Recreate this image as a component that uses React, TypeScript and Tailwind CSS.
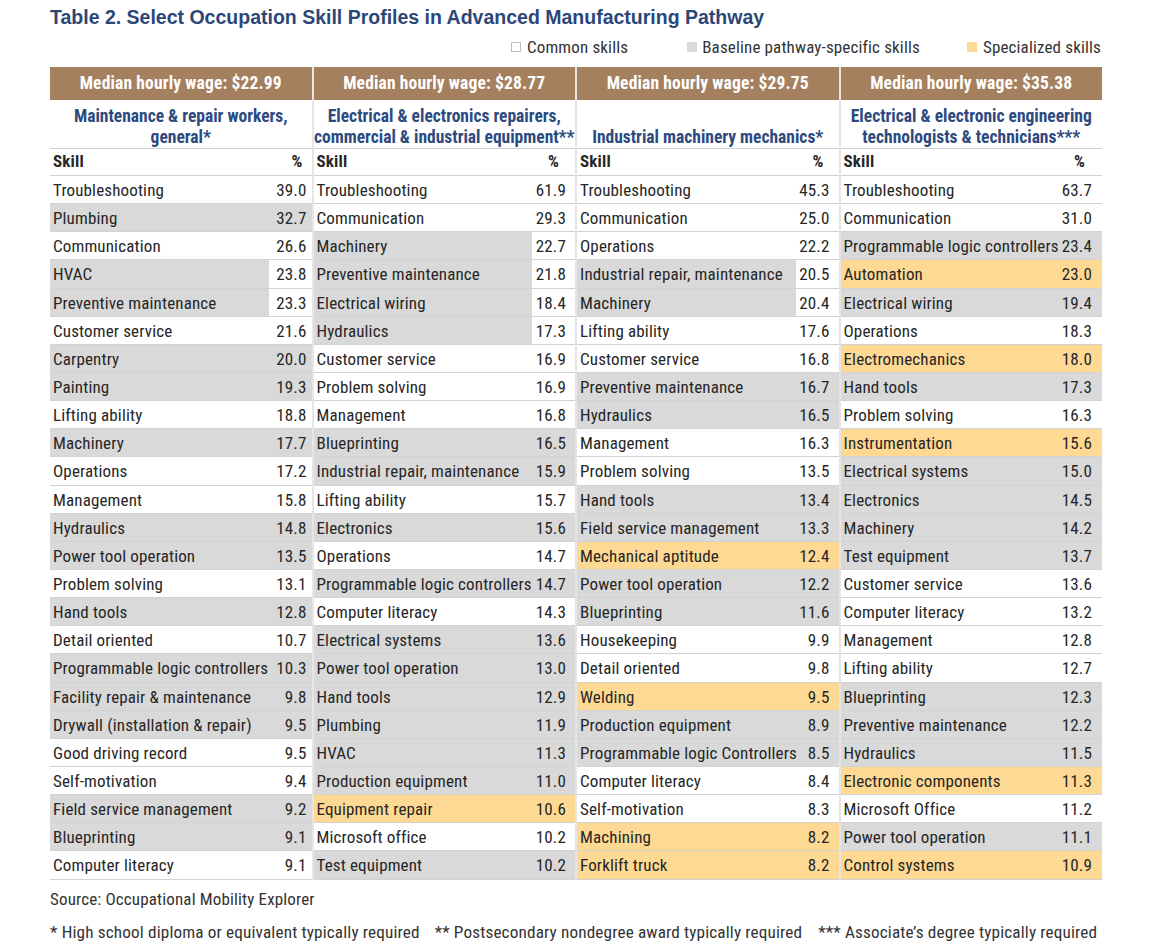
import React from "react";

type Kind = "w" | "g" | "s" | "y";
type Row = [string, string, Kind];

const columns: { wage: string; title: string[]; rows: Row[]; pr: string; prh: string }[] = [
  {
    wage: "Median hourly wage: $22.99",
    title: ["Maintenance & repair workers,", "general*"],
    pr: "pr-[5px]",
    prh: "pr-[9px]",
    rows: [
      ["Troubleshooting", "39.0", "w"],
      ["Plumbing", "32.7", "g"],
      ["Communication", "26.6", "w"],
      ["HVAC", "23.8", "s"],
      ["Preventive maintenance", "23.3", "s"],
      ["Customer service", "21.6", "w"],
      ["Carpentry", "20.0", "g"],
      ["Painting", "19.3", "g"],
      ["Lifting ability", "18.8", "w"],
      ["Machinery", "17.7", "g"],
      ["Operations", "17.2", "w"],
      ["Management", "15.8", "w"],
      ["Hydraulics", "14.8", "g"],
      ["Power tool operation", "13.5", "g"],
      ["Problem solving", "13.1", "w"],
      ["Hand tools", "12.8", "g"],
      ["Detail oriented", "10.7", "w"],
      ["Programmable logic controllers", "10.3", "g"],
      ["Facility repair & maintenance", "9.8", "g"],
      ["Drywall (installation & repair)", "9.5", "g"],
      ["Good driving record", "9.5", "w"],
      ["Self-motivation", "9.4", "w"],
      ["Field service management", "9.2", "g"],
      ["Blueprinting", "9.1", "g"],
      ["Computer literacy", "9.1", "w"],
    ],
  },
  {
    wage: "Median hourly wage: $28.77",
    title: ["Electrical & electronics repairers,", "commercial & industrial equipment**"],
    pr: "pr-[9px]",
    prh: "pr-[16px]",
    rows: [
      ["Troubleshooting", "61.9", "w"],
      ["Communication", "29.3", "w"],
      ["Machinery", "22.7", "s"],
      ["Preventive maintenance", "21.8", "s"],
      ["Electrical wiring", "18.4", "s"],
      ["Hydraulics", "17.3", "s"],
      ["Customer service", "16.9", "w"],
      ["Problem solving", "16.9", "w"],
      ["Management", "16.8", "w"],
      ["Blueprinting", "16.5", "g"],
      ["Industrial repair, maintenance", "15.9", "g"],
      ["Lifting ability", "15.7", "w"],
      ["Electronics", "15.6", "g"],
      ["Operations", "14.7", "w"],
      ["Programmable logic controllers", "14.7", "g"],
      ["Computer literacy", "14.3", "w"],
      ["Electrical systems", "13.6", "g"],
      ["Power tool operation", "13.0", "g"],
      ["Hand tools", "12.9", "g"],
      ["Plumbing", "11.9", "g"],
      ["HVAC", "11.3", "g"],
      ["Production equipment", "11.0", "g"],
      ["Equipment repair", "10.6", "y"],
      ["Microsoft office", "10.2", "w"],
      ["Test equipment", "10.2", "g"],
    ],
  },
  {
    wage: "Median hourly wage: $29.75",
    title: ["Industrial machinery mechanics*"],
    pr: "pr-[9px]",
    prh: "pr-[15px]",
    rows: [
      ["Troubleshooting", "45.3", "w"],
      ["Communication", "25.0", "w"],
      ["Operations", "22.2", "w"],
      ["Industrial repair, maintenance", "20.5", "s"],
      ["Machinery", "20.4", "s"],
      ["Lifting ability", "17.6", "w"],
      ["Customer service", "16.8", "w"],
      ["Preventive maintenance", "16.7", "g"],
      ["Hydraulics", "16.5", "g"],
      ["Management", "16.3", "w"],
      ["Problem solving", "13.5", "w"],
      ["Hand tools", "13.4", "g"],
      ["Field service management", "13.3", "g"],
      ["Mechanical aptitude", "12.4", "y"],
      ["Power tool operation", "12.2", "g"],
      ["Blueprinting", "11.6", "g"],
      ["Housekeeping", "9.9", "w"],
      ["Detail oriented", "9.8", "w"],
      ["Welding", "9.5", "y"],
      ["Production equipment", "8.9", "g"],
      ["Programmable logic Controllers", "8.5", "g"],
      ["Computer literacy", "8.4", "w"],
      ["Self-motivation", "8.3", "w"],
      ["Machining", "8.2", "y"],
      ["Forklift truck", "8.2", "y"],
    ],
  },
  {
    wage: "Median hourly wage: $35.38",
    title: ["Electrical & electronic engineering", "technologists & technicians***"],
    pr: "pr-[10px]",
    prh: "pr-[17px]",
    rows: [
      ["Troubleshooting", "63.7", "w"],
      ["Communication", "31.0", "w"],
      ["Programmable logic controllers", "23.4", "g"],
      ["Automation", "23.0", "y"],
      ["Electrical wiring", "19.4", "g"],
      ["Operations", "18.3", "w"],
      ["Electromechanics", "18.0", "y"],
      ["Hand tools", "17.3", "g"],
      ["Problem solving", "16.3", "w"],
      ["Instrumentation", "15.6", "y"],
      ["Electrical systems", "15.0", "g"],
      ["Electronics", "14.5", "g"],
      ["Machinery", "14.2", "g"],
      ["Test equipment", "13.7", "g"],
      ["Customer service", "13.6", "w"],
      ["Computer literacy", "13.2", "w"],
      ["Management", "12.8", "w"],
      ["Lifting ability", "12.7", "w"],
      ["Blueprinting", "12.3", "g"],
      ["Preventive maintenance", "12.2", "g"],
      ["Hydraulics", "11.5", "g"],
      ["Electronic components", "11.3", "y"],
      ["Microsoft Office", "11.2", "w"],
      ["Power tool operation", "11.1", "g"],
      ["Control systems", "10.9", "y"],
    ],
  },
];

const skillBg: Record<Kind, string> = {
  w: "bg-white",
  g: "bg-[#d9d9d9]",
  s: "bg-[#d9d9d9]",
  y: "bg-[#fed993]",
};
const valBg: Record<Kind, string> = {
  w: "bg-white",
  g: "bg-[#d9d9d9]",
  s: "bg-white",
  y: "bg-[#fed993]",
};

export default function App() {
  return (
    <div className="w-[1151px] h-[945px] bg-white pl-[50px] font-['Roboto',sans-serif] [font-stretch:75%] tracking-[0.15px] text-[#262626]">
      <h1 className="h-[34px] pt-[5px] text-[19.5px] leading-[24px] font-bold font-['Liberation_Sans',Arial,sans-serif] [font-stretch:100%] tracking-normal text-[#2c4777]">
        Table 2. Select Occupation Skill Profiles in Advanced Manufacturing Pathway
      </h1>
      <div className="w-[1052px] h-[26px] flex justify-end items-center text-[17px] leading-[20px] text-[#333] pr-[1px]">
        <div className="flex items-center gap-[6px] mr-[59px]">
          <span className="w-[10px] h-[10px] border border-[#bdbdbd] bg-white" />
          <span>Common skills</span>
        </div>
        <div className="flex items-center gap-[5px] mr-[47px]">
          <span className="w-[10px] h-[10px] bg-[#d9d9d9]" />
          <span>Baseline pathway-specific skills</span>
        </div>
        <div className="flex items-center gap-[6px]">
          <span className="w-[10px] h-[10px] bg-[#fed993]" />
          <span>Specialized skills</span>
        </div>
      </div>
      <div className="mt-[7px] w-[1052px] grid grid-cols-4 gap-x-[2px] bg-[#e6e6e6]">
        {columns.map((c, ci) => (
          <div key={ci} className="flex flex-col bg-white">
            <div className="h-[33px] bg-[#a5805f] text-white font-bold text-[17.5px] flex items-center justify-center">
              {c.wage}
            </div>
            <div className="h-[49px] border-b border-[#cfcfcf] flex flex-col items-center justify-end text-[#2c4a80] font-bold text-[17.5px] leading-[21px] tracking-normal text-center whitespace-nowrap">
              {c.title.map((t, i) => (
                <div key={i}>{t}</div>
              ))}
            </div>
            <div className="h-[27px] border-b border-[#cfcfcf] flex items-center font-bold text-[17px]">
              <div className="flex-1 pl-[3px]">Skill</div>
              <div className={`w-[43px] text-right ${c.prh}`}>%</div>
            </div>
            {c.rows.map(([name, val, k], ri) => (
              <div key={ri} className="h-[28.15px] border-b border-[#d2d2d2] flex text-[17px] leading-[28px]">
                <div className={`flex-1 pl-[3px] whitespace-nowrap ${skillBg[k]}`}>{name}</div>
                <div className={`w-[43px] text-right ${c.pr} ${valBg[k]}`}>{val}</div>
              </div>
            ))}
          </div>
        ))}
      </div>
      <div className="mt-[9px] text-[17px] leading-[20px] text-[#333]">Source: Occupational Mobility Explorer</div>
      <div className="mt-[13px] flex text-[17.2px] leading-[20px] text-[#333]">
        <span className="mr-[15px]">* High school diploma or equivalent typically required</span>
        <span className="mr-[16px]">** Postsecondary nondegree award typically required</span>
        <span>*** Associate’s degree typically required</span>
      </div>
    </div>
  );
}
